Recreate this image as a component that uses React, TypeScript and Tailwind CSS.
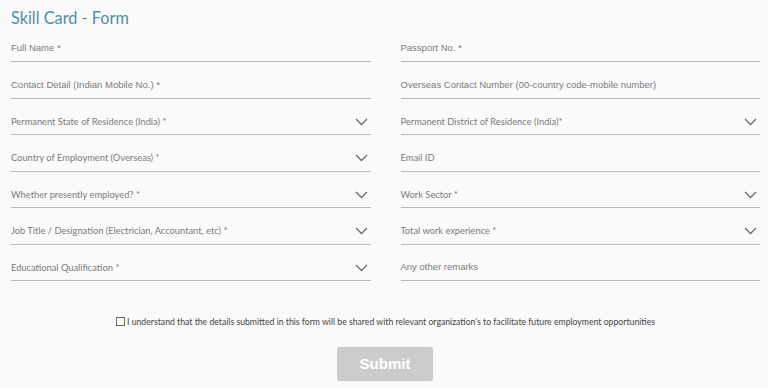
import React from "react";

type Field = { label: string; select?: boolean; lato?: boolean };

const left: Field[] = [
  { label: "Full Name *" },
  { label: "Contact Detail (Indian Mobile No.) *" },
  { label: "Permanent State of Residence (India) *", select: true, lato: true },
  { label: "Country of Employment (Overseas) *", select: true, lato: true },
  { label: "Whether presently employed? *", select: true, lato: true },
  { label: "Job Title / Designation (Electrician, Accountant, etc) *", select: true, lato: true },
  { label: "Educational Qualification *", select: true, lato: true },
];

const right: Field[] = [
  { label: "Passport No. *" },
  { label: "Overseas Contact Number (00-country code-mobile number)" },
  { label: "Permanent District of Residence (India)*", select: true, lato: true },
  { label: "Email ID", lato: true },
  { label: "Work Sector *", select: true, lato: true },
  { label: "Total work experience *", select: true, lato: true },
  { label: "Any other remarks" },
];

function Chevron() {
  return (
    <svg width="13" height="8" viewBox="0 0 13 8" className="mr-[3px]">
      <polyline points="1,1 6.5,6.5 12,1" fill="none" stroke="#6b6b6b" strokeWidth="1.3" />
    </svg>
  );
}

function FieldRow({ f }: { f: Field }) {
  return (
    <div className="flex h-[26px] items-center justify-between border-b border-[#b9b9b9]">
      <span
        className={
          f.lato
            ? "text-[9.3px] text-[#7a7a7a] [font-family:Lato,'Liberation_Sans',sans-serif]"
            : "text-[9.5px] text-[#7a7a7a] [font-family:'Liberation_Sans',Arial,sans-serif]"
        }
      >
        {f.label}
      </span>
      {f.select && <Chevron />}
    </div>
  );
}

export default function App() {
  return (
    <div className="min-h-[388px] w-[768px] bg-[#fafafa] pl-[11px] pr-[8px] pt-[8px]">
      <h1 className="text-[16.3px] leading-[20px] text-[#4f8ea8] [font-family:Lato,sans-serif]">
        Skill Card - Form
      </h1>
      <div className="mt-[8px] grid grid-cols-2 gap-x-[30px] gap-y-[10.5px]">
        {left.map((f, i) => (
          <React.Fragment key={i}>
            <FieldRow f={f} />
            <FieldRow f={right[i]} />
          </React.Fragment>
        ))}
      </div>
      <div className="mt-[34px] flex items-center pl-[105px]">
        <span className="mr-[2px] inline-block h-[9px] w-[9px] border border-[#666] bg-white" />
        <span className="text-[8.7px] text-[#444] [font-family:Lato,sans-serif]">
          I understand that the details submitted in this form will be shared with relevant organization's to facilitate future employment opportunities
        </span>
      </div>
      <div className="mt-[19px] flex pl-[326px]">
        <button className="h-[34px] w-[96px] rounded-[2px] bg-[#cccccc] text-[15px] font-bold text-white [font-family:'Liberation_Sans',Arial,sans-serif]">
          Submit
        </button>
      </div>
    </div>
  );
}
